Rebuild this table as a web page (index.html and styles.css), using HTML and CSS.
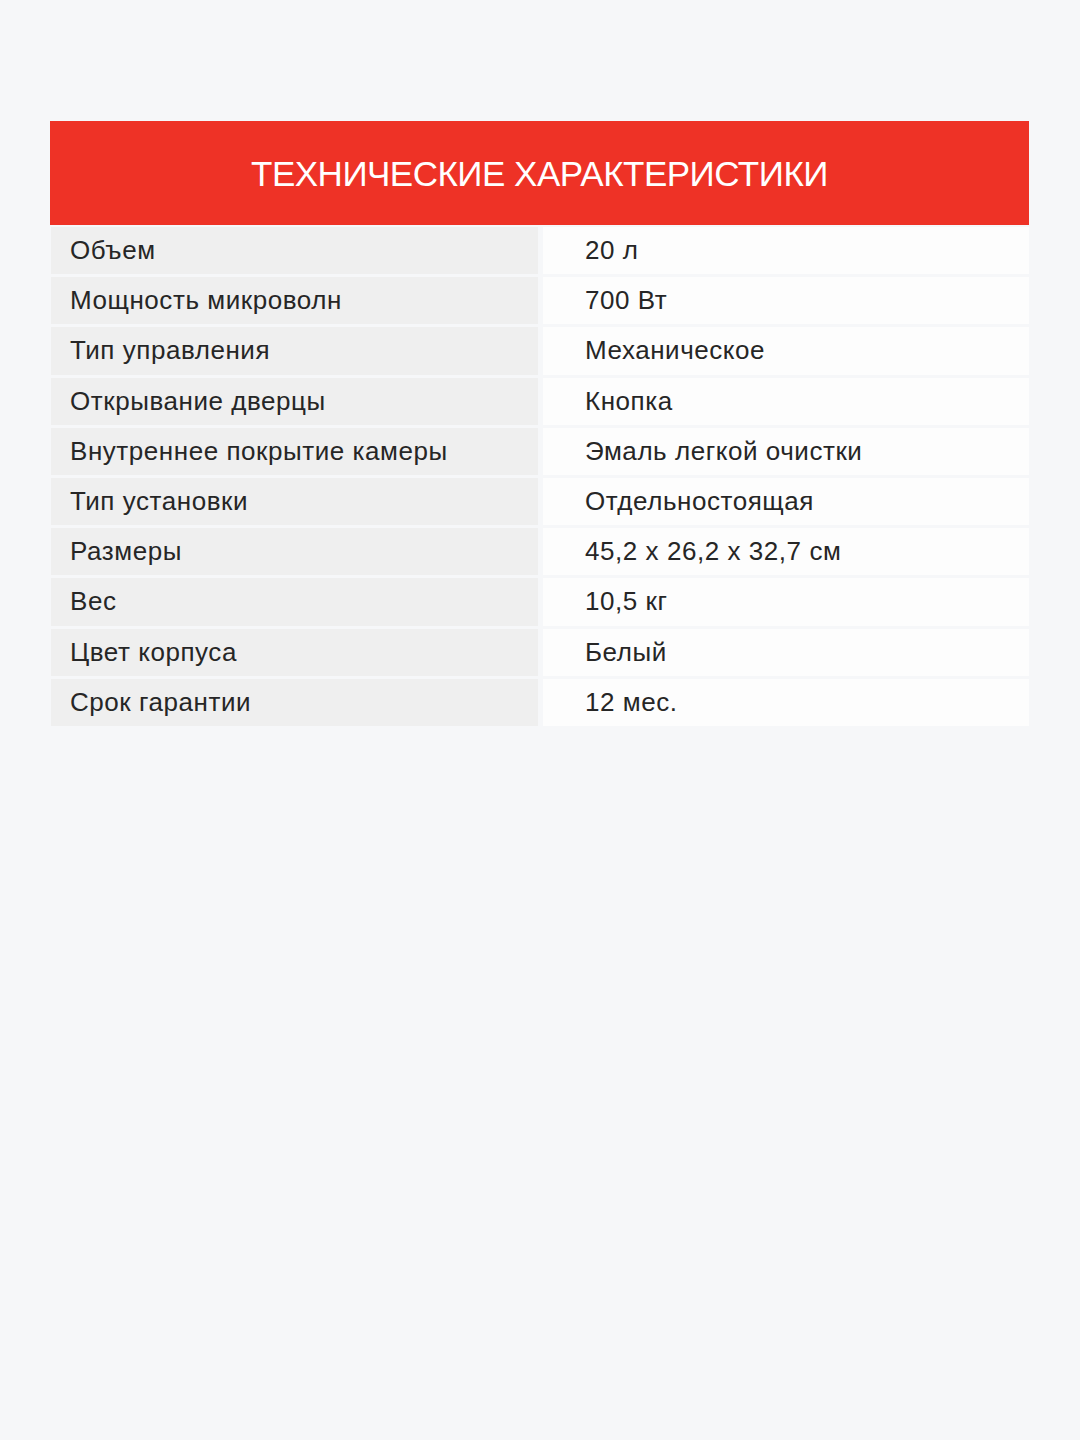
FILE: index.html
```html
<!DOCTYPE html>
<html lang="ru">
<head>
<meta charset="utf-8">
<title>Технические характеристики</title>
<link rel="stylesheet" href="styles.css">
</head>
<body>
<main class="page">
  <section class="specs">
    <header class="specs-head">ТЕХНИЧЕСКИЕ ХАРАКТЕРИСТИКИ</header>
    <div class="specs-grid">
      <div class="cell key">Объем</div><div class="cell val">20 л</div>
      <div class="cell key">Мощность микроволн</div><div class="cell val">700 Вт</div>
      <div class="cell key">Тип управления</div><div class="cell val">Механическое</div>
      <div class="cell key">Открывание дверцы</div><div class="cell val">Кнопка</div>
      <div class="cell key">Внутреннее покрытие камеры</div><div class="cell val">Эмаль легкой очистки</div>
      <div class="cell key">Тип установки</div><div class="cell val">Отдельностоящая</div>
      <div class="cell key">Размеры</div><div class="cell val">45,2 x 26,2 x 32,7 см</div>
      <div class="cell key">Вес</div><div class="cell val">10,5 кг</div>
      <div class="cell key">Цвет корпуса</div><div class="cell val">Белый</div>
      <div class="cell key">Срок гарантии</div><div class="cell val">12 мес.</div>
    </div>
  </section>
</main>
</body>
</html>
```

FILE: styles.css
```css
html, body {
  margin: 0;
  padding: 0;
  background: #f6f7f9;
}
body {
  width: 1080px;
  height: 1440px;
  font-family: "Liberation Sans", Arial, Helvetica, sans-serif;
  color: #222222;
}
.page {
  padding: 121px 51px 0 50px;
}
.specs {
  width: 979px;
}
.specs-head {
  height: 104px;
  background: #ee3226;
  color: #ffffff;
  font-size: 35px;
  letter-spacing: -0.5px;
  display: flex;
  align-items: center;
  justify-content: center;
  padding-top: 2px;
  box-sizing: border-box;
}
.specs-grid {
  display: grid;
  grid-template-columns: 487px 1fr;
  grid-auto-rows: 47.2px;
  column-gap: 5px;
  row-gap: 3px;
  margin-top: 2px;
  margin-left: 1px;
}
.cell {
  display: flex;
  align-items: center;
  font-size: 26px;
  letter-spacing: 0.55px;
  color: #262626;
}
.key {
  background: #efefef;
  padding-left: 19px;
}
.val {
  background: #fdfdfd;
  padding-left: 42px;
}
```
